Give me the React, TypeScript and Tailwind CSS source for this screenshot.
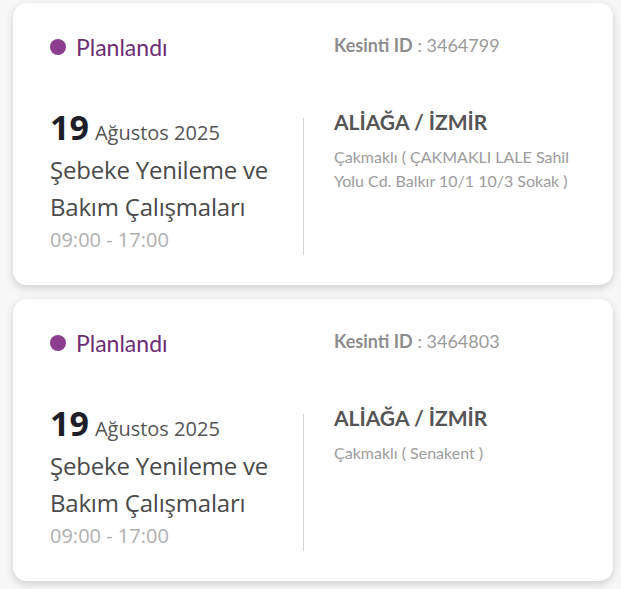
const OUTAGES = [
  {
    id: "3464799",
    day: "19",
    month: "Ağustos 2025",
    title: "Şebeke Yenileme ve Bakım Çalışmaları",
    time: "09:00 - 17:00",
    place: "ALİAĞA / İZMİR",
    address: "Çakmaklı ( ÇAKMAKLI LALE Sahil Yolu Cd. Balkır 10/1 10/3 Sokak )",
  },
  {
    id: "3464803",
    day: "19",
    month: "Ağustos 2025",
    title: "Şebeke Yenileme ve Bakım Çalışmaları",
    time: "09:00 - 17:00",
    place: "ALİAĞA / İZMİR",
    address: "Çakmaklı ( Senakent )",
  },
];

function OutageCard({ o }: { o: (typeof OUTAGES)[number] }) {
  return (
    <div className="rounded-[14px] bg-white px-[37px] pt-[30px] pb-[30px] shadow-[0_3px_8px_rgba(0,0,0,0.16)]">
      {/* header */}
      <div className="grid grid-cols-[284px_1fr] items-center">
        <div className="flex items-center gap-[10px]">
          <span className="h-[16px] w-[16px] rounded-full bg-[#8b3f8e]" />
          <span className="font-['Lato'] text-[23px] leading-[28px] text-[#6e2e73]">Planlandı</span>
        </div>
        <div className="-mt-[4px] font-['Lato'] text-[18px] leading-[24px] text-[#9a9a9a]">
          <span className="font-bold text-[#8d8d8d]">Kesinti ID</span> : {o.id}
        </div>
      </div>

      {/* body */}
      <div className="mt-[48px] flex">
        <div className="w-[253px] font-['Open_Sans']">
          <div className="flex items-baseline gap-[6px] leading-[37px]">
            <span className="text-[34px] font-bold text-[#1e1e28]">{o.day}</span>
            <span className="text-[20px] text-[#555]">{o.month}</span>
          </div>
          <div className="text-[24px] leading-[37px] tracking-[-0.2px] text-[#4a4a4a]">{o.title}</div>
          <div className="text-[20px] leading-[30px] text-[#b0b0b0]">{o.time}</div>
        </div>
        <div className="mt-[9px] w-px self-stretch bg-[#d6d6d6]" />
        <div className="flex-1 pl-[30px] font-['Lato']">
          <div className="text-[21px] font-bold leading-[26px] text-[#555]">{o.place}</div>
          <div className="mt-[10px] text-[16px] leading-[24px] text-[#9c9c9c]">{o.address}</div>
        </div>
      </div>
    </div>
  );
}

export default function App() {
  return (
    <div className="min-h-[589px] bg-[#f7f7f7] px-[13px] pt-[3px] pb-[8px]">
      <div className="flex w-[600px] flex-col gap-[14px]">
        {OUTAGES.map((o) => (
          <OutageCard key={o.id} o={o} />
        ))}
      </div>
    </div>
  );
}
